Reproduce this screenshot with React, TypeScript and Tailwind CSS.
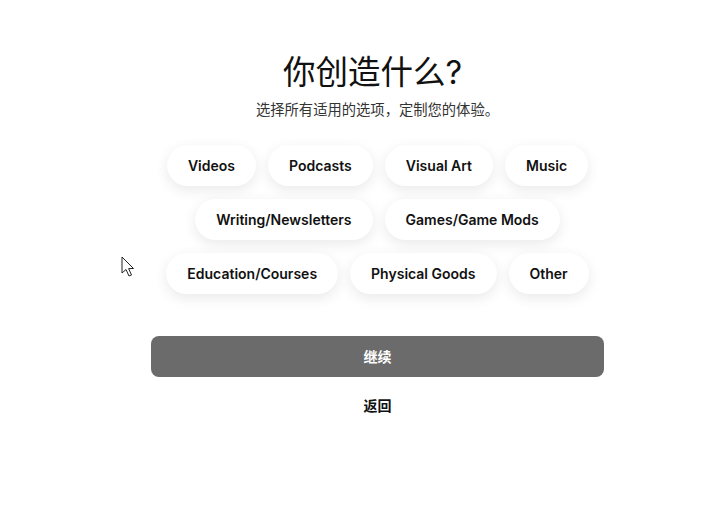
const options = [
  "Videos",
  "Podcasts",
  "Visual Art",
  "Music",
  "Writing/Newsletters",
  "Games/Game Mods",
  "Education/Courses",
  "Physical Goods",
  "Other",
];

function Cursor() {
  return (
    <svg
      className="absolute left-[121px] top-[256px]"
      width="14"
      height="22"
      viewBox="0 0 14 22"
    >
      <path
        d="M1 1 L1 17 L5 13.5 L8 20 L10.5 19 L7.6 12.6 L12.5 12.5 Z"
        fill="#fff"
        stroke="#222"
        strokeWidth="1"
        strokeLinejoin="round"
      />
    </svg>
  );
}

export default function App() {
  return (
    <div
      className="relative min-h-[513px] w-full bg-white"
      style={{ fontFamily: "Inter, 'Noto Sans CJK SC', sans-serif" }}
    >
      <div className="flex flex-col items-center pl-8 pt-[52px]">
        {/* Heading */}
        <h1 className="mr-[10px] text-[32.5px] leading-[42px] font-normal text-[#111]">你创造什么?</h1>
        <p className="mt-[6px] text-[14.3px] leading-[20px] text-[#333]">
          选择所有适用的选项，定制您的体验。
        </p>

        {/* Option pills */}
        <div className="mt-[25px] flex w-[453px] flex-wrap justify-center gap-x-3 gap-y-[13px]">
          {options.map((o) => (
            <button
              key={o}
              className="h-[41px] rounded-full bg-white px-[21px] text-[14px] font-semibold text-[#111] shadow-[0_4px_14px_rgba(0,0,0,0.09)]"
            >
              {o}
            </button>
          ))}
        </div>

        {/* Actions */}
        <button className="mt-[42px] h-[41px] w-[453px] rounded-lg bg-[#6b6b6b] text-[14px] font-bold text-white">
          继续
        </button>
        <button className="mt-[18px] text-[14px] font-bold text-[#111]">返回</button>
      </div>
      <Cursor />
    </div>
  );
}
